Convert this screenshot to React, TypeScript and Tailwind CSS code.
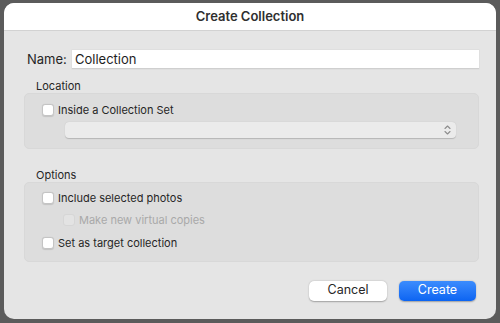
import React from "react";

function Check({ disabled = false }: { disabled?: boolean }) {
  return (
    <span
      className={
        disabled
          ? "block w-[12px] h-[12px] rounded-[3px] bg-[#e3e3e3] border border-[#d6d6d6]"
          : "block w-[12px] h-[12px] rounded-[3px] bg-white border border-[#c4c4c4] shadow-[0_0.5px_1px_rgba(0,0,0,0.12)]"
      }
    />
  );
}

function Row({ label, disabled = false, indent = false }: { label: string; disabled?: boolean; indent?: boolean }) {
  return (
    <div className={"flex items-center h-[14px] gap-[4px] " + (indent ? "pl-[38px]" : "pl-[17px]")}>
      <Check disabled={disabled} />
      <span className={"text-[11px] leading-[14px] " + (disabled ? "text-[#a9a9a9]" : "text-[#262626]")}>{label}</span>
    </div>
  );
}

export default function App() {
  return (
    <div
      className="w-[500px] h-[323px] bg-[#5b5b5b] pt-[3px] pl-[4px] pr-[4px] pb-[4px]"
      style={{ fontFamily: "Inter, 'Liberation Sans', sans-serif" }}
    >
      <div className="w-full h-full rounded-[10px] bg-[#e5e5e5] overflow-hidden flex flex-col">
        <div className="h-[28px] bg-white border-b border-[#d2d2d2] flex items-center justify-center shrink-0">
          <span className="text-[13px] font-semibold text-[#2f2f2f]">Create Collection</span>
        </div>
        <div className="flex-1 flex flex-col pl-[20px] pr-[17px]">
          <div className="flex items-center mt-[19px] pl-[3px]">
            <span className="text-[13px] text-[#262626] w-[45px]">Name:</span>
            <div className="flex-1 h-[19px] bg-white border-b border-[#cfcfcf] shadow-[0_0_0_0.5px_#dadada] flex items-center pl-[3px]">
              <span className="text-[13px] text-[#1e1e1e]">Collection</span>
            </div>
          </div>

          <div className="mt-[10px] pl-[12px] text-[11px] leading-[13px] text-[#262626]">Location</div>
          <div className="rounded-[5px] bg-[#dddddd] border border-[#d8d8d8] pt-[9px] pb-[10px] flex flex-col gap-[5px]">
            <Row label="Inside a Collection Set" />
            <div className="ml-[40px] mr-[22px] h-[16px] rounded-[4px] bg-[#ebebeb] shadow-[0_0.5px_1px_rgba(0,0,0,0.18)] flex items-center justify-end pr-[5px]">
              <svg width="7" height="10" viewBox="0 0 7 10" fill="none" stroke="#8d8d8d" strokeWidth="1.1" strokeLinecap="round" strokeLinejoin="round">
                <path d="M1 3.5 L3.5 1 L6 3.5" />
                <path d="M1 6.5 L3.5 9 L6 6.5" />
              </svg>
            </div>
          </div>

          <div className="mt-[20px] pl-[12px] text-[11px] leading-[13px] text-[#262626]">Options</div>
          <div className="rounded-[5px] bg-[#dddddd] border border-[#d8d8d8] pt-[8px] pb-[11px] flex flex-col gap-[8.5px]">
            <Row label="Include selected photos" />
            <Row label="Make new virtual copies" disabled indent />
            <Row label="Set as target collection" />
          </div>

          <div className="mt-[19px] flex justify-end gap-[12px] pr-[3px]">
            <div className="w-[78px] h-[20px] rounded-[5px] bg-white shadow-[0_0.5px_1.5px_rgba(0,0,0,0.3)] flex items-center justify-center text-[12.5px] text-[#262626]">
              Cancel
            </div>
            <div className="w-[77px] h-[20px] rounded-[5px] bg-gradient-to-b from-[#3b8cfd] to-[#0b64f2] shadow-[0_0.5px_1.5px_rgba(0,0,0,0.3)] flex items-center justify-center text-[12.5px] text-white">
              Create
            </div>
          </div>
        </div>
      </div>
    </div>
  );
}
